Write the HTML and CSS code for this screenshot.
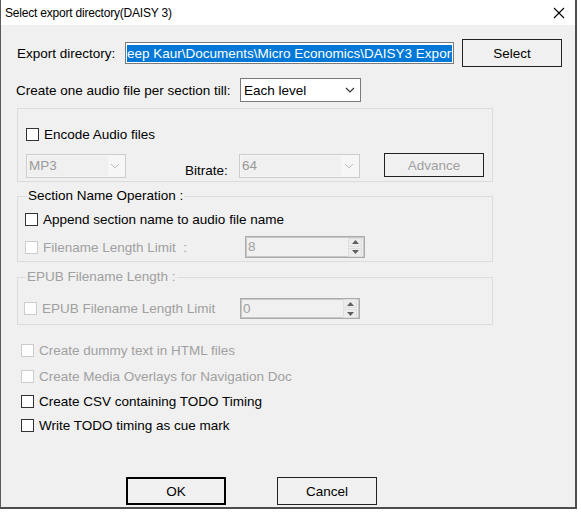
FILE: index.html
```html
<!DOCTYPE html>
<html>
<head>
<meta charset="utf-8">
<link rel="stylesheet" href="styles.css">
</head>
<body>
<div class="dialog">
  <div class="titlebar">
    <span class="title">Select export directory(DAISY 3)</span>
    <svg class="close" width="12" height="12" viewBox="0 0 12 12"><path d="M1 1 L11 11 M11 1 L1 11" stroke="#000" stroke-width="1.1" fill="none"/></svg>
  </div>
  <div class="content">
    <div class="row row-dir">
      <span class="lbl lbl-dir">Export directory:</span>
      <div class="textbox"><span class="sel">eep Kaur\Documents\Micro Economics\DAISY3 Export</span></div>
      <div class="btn btn-select">Select</div>
    </div>
    <div class="row row-level">
      <span class="lbl lbl-level">Create one audio file per section till:</span>
      <div class="combo combo-level"><span class="combo-text">Each level</span>
        <svg class="chev" width="10" height="6" viewBox="0 0 10 6"><path d="M1 1 L5 5 L9 1" stroke="#333" stroke-width="1.2" fill="none"/></svg>
      </div>
    </div>
    <div class="group group-enc">
      <div class="check-row">
        <span class="cb"></span><span class="cb-lbl">Encode Audio files</span>
      </div>
      <div class="ctrl-row">
        <div class="combo dis combo-mp3"><span class="dis-field">MP3</span>
          <svg class="chev" width="10" height="6" viewBox="0 0 10 6"><path d="M1 1 L5 5 L9 1" stroke="#bcbcbc" stroke-width="1" fill="none"/></svg>
        </div>
        <span class="lbl lbl-bitrate">Bitrate:</span>
        <div class="combo dis combo-bit"><span class="dis-field wide">64</span>
          <svg class="chev" width="10" height="6" viewBox="0 0 10 6"><path d="M1 1 L5 5 L9 1" stroke="#bcbcbc" stroke-width="1" fill="none"/></svg>
        </div>
        <div class="btn btn-adv">Advance</div>
      </div>
    </div>
    <div class="group group-sec">
      <span class="legend">Section Name Operation :</span>
      <div class="check-row sec-append">
        <span class="cb"></span><span class="cb-lbl">Append section name to audio file name</span>
      </div>
      <div class="spin-row sec-limit">
        <span class="cb dis"></span><span class="cb-lbl dis-text lim-lbl">Filename Length Limit&nbsp; :</span>
        <div class="spin spin-sec"><span class="spin-val">8</span>
          <div class="spin-btns">
            <span class="sb"><svg width="7" height="4" viewBox="0 0 7 4"><path d="M0 4 L3.5 0 L7 4 Z" fill="#606060"/></svg></span>
            <span class="sb"><svg width="7" height="4" viewBox="0 0 7 4"><path d="M0 0 L3.5 4 L7 0 Z" fill="#606060"/></svg></span>
          </div>
        </div>
      </div>
    </div>
    <div class="group group-epub">
      <span class="legend dis-text">EPUB Filename Length :</span>
      <div class="spin-row epub-limit">
        <span class="cb dis"></span><span class="cb-lbl dis-text epub-lbl">EPUB Filename Length Limit</span>
        <div class="spin spin-epub"><span class="spin-val">0</span>
          <div class="spin-btns">
            <span class="sb"><svg width="7" height="4" viewBox="0 0 7 4"><path d="M0 4 L3.5 0 L7 4 Z" fill="#606060"/></svg></span>
            <span class="sb"><svg width="7" height="4" viewBox="0 0 7 4"><path d="M0 0 L3.5 4 L7 0 Z" fill="#606060"/></svg></span>
          </div>
        </div>
      </div>
    </div>
    <div class="opts">
      <div class="opt opt1"><span class="cb dis"></span><span class="cb-lbl dis-text">Create dummy text in HTML files</span></div>
      <div class="opt opt2"><span class="cb dis"></span><span class="cb-lbl dis-text">Create Media Overlays for Navigation Doc</span></div>
      <div class="opt opt3"><span class="cb"></span><span class="cb-lbl">Create CSV containing TODO Timing</span></div>
      <div class="opt opt4"><span class="cb"></span><span class="cb-lbl">Write TODO timing as cue mark</span></div>
    </div>
    <div class="buttons">
      <div class="btn btn-ok">OK</div>
      <div class="btn btn-cancel">Cancel</div>
    </div>
  </div>
</div>
</body>
</html>
```
FILE: styles.css
```css
* { box-sizing: border-box; }
html, body { margin: 0; padding: 0; background: #ffffff; }
body { font-family: "Liberation Sans", Arial, sans-serif; font-size: 13.5px; color: #000; }

.dialog {
  width: 577px;
  height: 509px;
  background: #f0f0f0;
  border-left: 1px solid #5a5a5a;
  border-right: 2px solid #4d4d4d;
  border-bottom: 2px solid #4d4d4d;
  overflow: hidden;
}
.titlebar {
  height: 25px;
  background: #fff;
  display: flex;
  align-items: center;
  justify-content: space-between;
  padding-left: 5px;
  padding-right: 10px;
  margin-left: -1px;
}
.title { font-size: 12px; letter-spacing: -0.2px; color: #000; }
.close { display: block; }

.row { display: flex; align-items: center; }
.row-dir { margin-top: 14px; height: 28px; padding-left: 16px; }
.lbl-dir { width: 108px; }
.textbox {
  width: 329px; height: 22px;
  background: #fff;
  border: 1px solid #7a7a7a;
  padding: 2px 1px;
  overflow: hidden;
  white-space: nowrap;
  display: flex;
}
.sel { background: #0078d7; color: #fff; display: block; height: 17px; line-height: 17px; min-width: 100%; }
.btn {
  display: flex; align-items: center; justify-content: center;
  background: #f0f0f0;
  border: 1px solid #222;
}
.btn-select { width: 100px; height: 28px; margin-left: 8px; }

.row-level { margin-top: 11px; height: 24px; padding-left: 15px; }
.lbl-level { width: 224px; }
.combo {
  height: 24px;
  background: #fff;
  border: 1px solid #7a7a7a;
  display: flex; align-items: center; justify-content: space-between;
  padding-left: 3px; padding-right: 5px;
}
.combo-level { width: 121px; }
.chev { display: block; }

.group {
  margin-left: 16px;
  width: 476px;
  border: 1px solid #dcdcdc;
}
.group-enc { margin-top: 6px; height: 74px; padding: 19px 0 0 8px; }
.check-row { display: flex; align-items: center; height: 13px; }
.cb {
  width: 13px; height: 13px;
  border: 1px solid #333;
  background: #fff;
  flex: none;
}
.cb.dis { border-color: #cccccc; background: #fdfdfd; }
.cb-lbl { margin-left: 5px; white-space: nowrap; }
.dis-text { color: #a0a0a0; }

.ctrl-row { display: flex; align-items: flex-start; margin-top: 12px; height: 25px; }
.combo.dis { border-color: #cccccc; background: #f6f6f6; padding-left: 1px; }
.combo-mp3 { width: 100px; margin-top: 1px; }
.dis-field { background: #f0f0f0; color: #9a9a9a; width: 80px; height: 20px; line-height: 20px; padding-left: 1px; }
.dis-field.wide { width: 100px; }
.lbl-bitrate { margin-left: 59px; margin-top: 10px; width: 54px; }
.combo-bit { width: 121px; margin-top: 1px; }
.btn-adv { width: 100px; height: 24px; margin-left: 24px; color: #a0a0a0; }

.group-sec { margin-top: 14px; height: 66px; padding: 0 0 0 7px; }
.legend {
  display: block;
  width: max-content;
  margin-top: -9px;
  margin-left: 2px;
  padding: 0 1px;
  background: #f0f0f0;
  height: 16px;
  line-height: 16px;
}
.sec-append { margin-top: 9px; height: 13px; }
.spin-row { display: flex; align-items: center; height: 22px; }
.sec-limit { margin-top: 10px; }
.lim-lbl { width: 202px; }
.spin {
  width: 120px; height: 22px;
  border: 1px solid #ababab;
  box-shadow: inset 0 0 0 1px #c8c8c8;
  display: flex; align-items: center; justify-content: space-between;
  padding-left: 2px; padding-right: 2px;
  color: #a0a0a0;
}
.spin-val { line-height: 18px; }
.spin-btns { display: flex; flex-direction: column; gap: 1px; }
.sb {
  width: 14px; height: 9px;
  background: #ececec;
  border: 1px solid #dedede;
  display: flex; align-items: center; justify-content: center;
}
.sb svg { display: block; }

.group-epub { margin-top: 15px; height: 48px; padding: 0 0 0 6px; }
.epub-limit { margin-top: 13px; height: 21px; }
.epub-lbl { width: 198px; }
.spin-epub { height: 21px; }

.opts { padding-left: 20px; margin-top: 15px; }
.opt { display: flex; align-items: center; height: 20px; }
.opt2 { margin-top: 6px; }
.opt3 { margin-top: 5px; }
.opt4 { margin-top: 4px; }

.buttons { display: flex; margin-top: 42px; padding-left: 125px; }
.btn-ok { width: 100px; height: 28px; border: 2px solid #000; }
.btn-cancel { width: 100px; height: 28px; margin-left: 51px; border: 1px solid #222; }
```
